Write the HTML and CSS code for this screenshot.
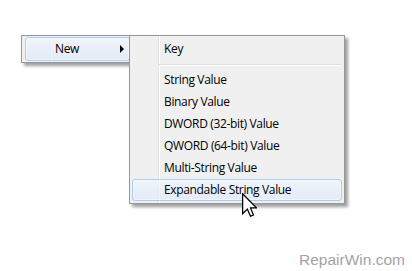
FILE: index.html
```html
<!DOCTYPE html>
<html>
<head>
<meta charset="utf-8">
<link rel="stylesheet" href="styles.css">
</head>
<body>
<div class="stage">
  <div class="menus">
    <div class="menu menu-main">
      <div class="item item-hl">
        <span class="label">New</span>
        <span class="arrow"></span>
      </div>
    </div>
    <div class="menu menu-sub">
      <div class="item"><span class="label">Key</span></div>
      <div class="sep"></div>
      <div class="item"><span class="label">String Value</span></div>
      <div class="item"><span class="label">Binary Value</span></div>
      <div class="item"><span class="label">DWORD (32-bit) Value</span></div>
      <div class="item"><span class="label">QWORD (64-bit) Value</span></div>
      <div class="item"><span class="label">Multi-String Value</span></div>
      <div class="item item-hl"><span class="label">Expandable String Value</span></div>
      <svg class="cursor" width="15" height="24" viewBox="0 0 12 19">
        <path d="M0.5 0.5 L0.5 16.5 L4.3 12.8 L6.8 18.5 L9.2 17.5 L6.8 11.8 L11.5 11.8 Z" fill="#fff" stroke="#000" stroke-width="1" stroke-linejoin="miter"/>
      </svg>
    </div>
  </div>
  <div class="watermark">RepairWin.com</div>
</div>
</body>
</html>
```
FILE: styles.css
```css
html, body {
  margin: 0;
  padding: 0;
  background: #ffffff;
}
.stage {
  width: 412px;
  height: 271px;
  display: flex;
  flex-direction: column;
  overflow: hidden;
  font-family: "Open Sans", "Noto Sans", sans-serif;
  font-size: 12px;
  letter-spacing: -0.35px;
  color: #000;
}
.menus {
  display: flex;
  align-items: flex-start;
  padding: 35px 0 0 21px;
}
.menu {
  box-sizing: border-box;
  border: 1px solid #979797;
  background-color: #f0f0f0;
  background-image: linear-gradient(to right, transparent 28px, #e2e3e3 28px, #e2e3e3 29px, #ffffff 29px, #ffffff 30px, transparent 30px);
  background-repeat: no-repeat;
  box-shadow: 3px 3px 3px rgba(0, 0, 0, 0.38);
}
.menu-main {
  width: 113px;
  padding: 1px 3px;
}
.menu-main .item {
  height: 24px;
  line-height: 24px;
  padding-left: 30px;
}
.menu-sub {
  position: relative;
  z-index: 1;
  width: 216px;
  margin-left: -5px;
  padding: 2px 2px;
}
.item {
  box-sizing: border-box;
  display: flex;
  align-items: center;
  height: 22px;
  line-height: 22px;
  padding-left: 32px;
  border: 1px solid transparent;
  border-radius: 3px;
  white-space: nowrap;
}
.label {
  margin-left: -1px;
}
.item-hl {
  border-color: #aecbf1;
  background: linear-gradient(to bottom, rgba(240, 246, 253, 0.75), rgba(222, 233, 250, 0.75));
  box-shadow: inset 0 0 0 1px rgba(255, 255, 255, 0.45);
}
.arrow {
  margin-left: auto;
  margin-right: 5px;
  width: 0;
  height: 0;
  border-left: 4px solid #000;
  border-top: 4px solid transparent;
  border-bottom: 4px solid transparent;
}
.sep {
  height: 9px;
  margin-left: 27px;
  background: linear-gradient(to bottom, transparent 4px, #e0e0e0 4px, #e0e0e0 5px, #ffffff 5px, #ffffff 6px, transparent 6px);
}
.cursor {
  position: absolute;
  left: 112px;
  top: 157px;
}
.watermark {
  margin-top: auto;
  padding: 0 7px 2px 0;
  text-align: right;
  font-family: "Liberation Sans", Arial, sans-serif;
  font-size: 15.5px;
  letter-spacing: 0;
  line-height: 18px;
  color: #a3a3a3;
}
```
